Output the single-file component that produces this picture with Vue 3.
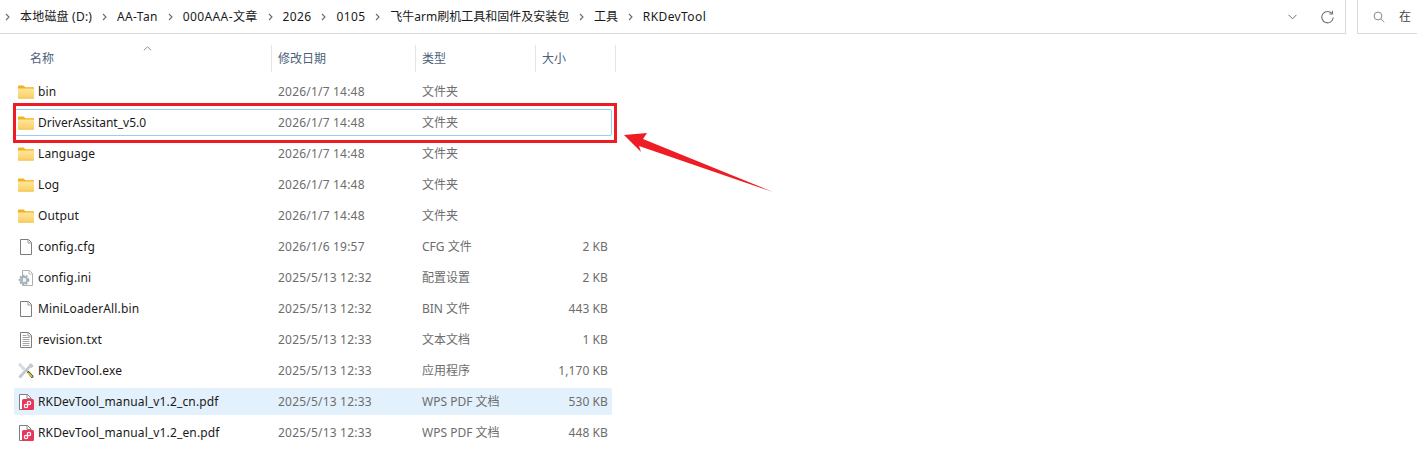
<script setup>
const crumbs = [
  { text: '本地磁盘 (D:)', cls: 'tight' },
  { text: 'AA-Tan', cls: 'latin' },
  { text: '000AAA-文章', cls: 'latin' },
  { text: '2026', cls: 'latin' },
  { text: '0105', cls: 'latin' },
  { text: '飞牛arm刷机工具和固件及安装包', cls: '' },
  { text: '工具', cls: '' },
  { text: 'RKDevTool', cls: 'latin' }
]
const columns = [
  { label: '名称', cls: 'col-name' },
  { label: '修改日期', cls: 'col-date' },
  { label: '类型', cls: 'col-type' },
  { label: '大小', cls: 'col-size' }
]
const files = [
  { name: 'bin', date: '2026/1/7 14:48', type: '文件夹', size: '', icon: 'folder' },
  { name: 'DriverAssitant_v5.0', date: '2026/1/7 14:48', type: '文件夹', size: '', icon: 'folder', state: 'focused' },
  { name: 'Language', date: '2026/1/7 14:48', type: '文件夹', size: '', icon: 'folder' },
  { name: 'Log', date: '2026/1/7 14:48', type: '文件夹', size: '', icon: 'folder' },
  { name: 'Output', date: '2026/1/7 14:48', type: '文件夹', size: '', icon: 'folder' },
  { name: 'config.cfg', date: '2026/1/6 19:57', type: 'CFG 文件', size: '2 KB', icon: 'doc' },
  { name: 'config.ini', date: '2025/5/13 12:32', type: '配置设置', size: '2 KB', icon: 'ini' },
  { name: 'MiniLoaderAll.bin', date: '2025/5/13 12:32', type: 'BIN 文件', size: '443 KB', icon: 'doc' },
  { name: 'revision.txt', date: '2025/5/13 12:33', type: '文本文档', size: '1 KB', icon: 'txt' },
  { name: 'RKDevTool.exe', date: '2025/5/13 12:33', type: '应用程序', size: '1,170 KB', icon: 'exe' },
  { name: 'RKDevTool_manual_v1.2_cn.pdf', date: '2025/5/13 12:33', type: 'WPS PDF 文档', size: '530 KB', icon: 'pdf', state: 'hovered' },
  { name: 'RKDevTool_manual_v1.2_en.pdf', date: '2025/5/13 12:33', type: 'WPS PDF 文档', size: '448 KB', icon: 'pdf' }
]
</script>

<template>
  <div class="window">
    <header class="topbar">
      <div class="address">
        <nav class="crumbs">
          <template v-for="c in crumbs" :key="c.text">
            <svg class="chev" width="5" height="8" viewBox="0 0 5 8"><path d="M1 1l3 3-3 3" fill="none" stroke="#6b6b6b" stroke-width="1.1" /></svg>
            <span class="crumb" :class="c.cls">{{ c.text }}</span>
          </template>
        </nav>
        <div class="address-tools">
          <svg width="9" height="6" viewBox="0 0 9 6"><path d="M.5.8l4 4 4-4" fill="none" stroke="#6f6f6f" stroke-width="1" /></svg>
          <svg width="13" height="14" viewBox="0 0 13 14"><path d="M10.800 3.400A5.700 5.700 0 1 0 12.200 7.500" fill="none" stroke="#707070" stroke-width="1.100" /><path d="M11.500 .8v3.200H8.300" fill="none" stroke="#707070" stroke-width="1.100" /></svg>
        </div>
      </div>
      <div class="search">
        <svg width="12" height="12" viewBox="0 0 12 12"><circle cx="5" cy="5" r="3.900" fill="none" stroke="#8a8a8a" stroke-width="1" /><path d="M8 8l3.300 3.300" stroke="#b08a70" stroke-width="1" /></svg>
        <span class="search-text">在</span>
      </div>
    </header>

    <div class="columns">
      <div v-for="c in columns" :key="c.label" class="col-head" :class="c.cls">{{ c.label }}</div>
      <svg class="sort" width="9" height="5" viewBox="0 0 9 5"><path d="M.8 4.400L4.500.8l3.700 3.600" fill="none" stroke="#8c8c8c" stroke-width="1" /></svg>
    </div>

    <ul class="list">
      <li v-for="f in files" :key="f.name" class="row" :class="f.state">
        <span class="cell-name">
          <svg v-if="f.icon === 'folder'" class="icon" width="16" height="16" viewBox="0 0 16 16">
            <defs>
              <linearGradient id="folderBody" x1="0" y1="0" x2="0" y2="1">
                <stop offset="0" stop-color="#fee59b" />
                <stop offset="1" stop-color="#fbcf62" />
              </linearGradient>
            </defs>
            <path d="M0 2.400C0 1.900.4 1.500 1 1.500h4.600L7.400 3.200H15c.6 0 1 .4 1 1v2H0z" fill="#f3b01f" />
            <path d="M0 4.600h15c.6 0 1 .4 1 1v8c0 .6-.4 1-1 1H1c-.6 0-1-.4-1-1z" fill="url(#folderBody)" />
            <path d="M0 13.700h16c0 .6-.4 .9-1 .9H1c-.6 0-1-.3-1-.9z" fill="#efbb4a" />
          </svg>
          <svg v-else-if="f.icon === 'doc'" class="icon" width="16" height="16" viewBox="0 0 16 16">
            <path d="M2.500.5h8l3 3v12h-11z" fill="#fff" stroke="#7d7d7d" />
            <path d="M10 .5v3.500h3.500" fill="none" stroke="#9a9a9a" />
          </svg>
          <svg v-else-if="f.icon === 'ini'" class="icon" width="16" height="16" viewBox="0 0 16 16">
            <path d="M4.500.5h7l3 3v12h-10z" fill="#fff" stroke="#b0b0b0" />
            <path d="M11 .5v3.500h3.500" fill="none" stroke="#c0c0c0" />
            <circle cx="6" cy="10" r="4.200" fill="none" stroke="#a2adb4" stroke-width="2.200" stroke-dasharray="1.800 1.200" />
            <circle cx="6" cy="10" r="3" fill="none" stroke="#aab4bb" stroke-width="1.800" />
            <circle cx="6" cy="10" r="1.300" fill="#eef1f3" />
          </svg>
          <svg v-else-if="f.icon === 'txt'" class="icon" width="16" height="16" viewBox="0 0 16 16">
            <path d="M2.500.5h8l3 3v12h-11z" fill="#fff" stroke="#7d7d7d" />
            <path d="M10 .5v3.500h3.500" fill="none" stroke="#9a9a9a" />
            <path d="M4.500 3.500h4M4.500 5.500h7M4.500 7.500h7M4.500 9.500h7M4.500 11.500h7M4.500 13.500h7" stroke="#9a9a9a" stroke-width=".9" />
          </svg>
          <svg v-else-if="f.icon === 'exe'" class="icon" width="16" height="16" viewBox="0 0 16 16">
            <path d="M12.500.5l2.800 2.300-1.700 1.700-1.100-.4-10 11-1.800-1.700L10.800 3z" fill="#c3cbd1" stroke="#98a1a8" stroke-width=".4" />
            <path d="M.5 1.800L2.300.4l4.600 5-1.500 1.700z" fill="#dde2e6" stroke="#a5adb3" stroke-width=".4" />
            <path d="M7.400 7.700l1.500-1.500 1.400 1.500-1.500 1.500z" fill="#b8bfc4" />
            <path d="M9 9.300l1.500-1.500 4.800 5c.7.900-.5 2.700-1.800 2.200z" fill="#4a4636" />
            <path d="M10.300 9.700l3.900 4.100" stroke="#efcd38" stroke-width="1.500" />
          </svg>
          <svg v-else class="icon" width="16" height="16" viewBox="0 0 16 16">
            <path d="M1.500.5h8l3.500 3.500v11.500h-11.500z" fill="#fff" stroke="#7d7d7d" />
            <path d="M9 .5v4h4" fill="none" stroke="#8a8a8a" />
            <rect x="4" y="5" width="12" height="11" rx="1.500" fill="#e8365d" />
            <circle cx="11" cy="9" r="1.700" fill="none" stroke="#fff" stroke-width="1.200" />
            <circle cx="8" cy="12" r="1.700" fill="none" stroke="#fff" stroke-width="1.200" />
          </svg>
          <span class="file-name">{{ f.name }}</span>
        </span>
        <span class="cell-date">{{ f.date }}</span>
        <span class="cell-type">{{ f.type }}</span>
        <span class="cell-size">{{ f.size }}</span>
      </li>
    </ul>

    <div class="red-box"></div>
    <svg class="arrow" width="160" height="70" viewBox="0 0 160 70">
      <polygon points="4,13 27,11 23,17 153,70 19,24 21,30" fill="#ee1c25" />
    </svg>
  </div>
</template>

<style>
html, body { margin: 0; background: #fff; }
</style>

<style scoped>
.window {
  position: relative;
  width: 1417px;
  height: 469px;
  overflow: hidden;
  background: #fff;
  font-family: "Noto Sans", "Noto Sans CJK SC", sans-serif;
  font-size: 12px;
  line-height: 16px;
  color: #1a1a1a;
}
.topbar {
  display: flex;
  height: 34px;
  gap: 11px;
}
.address {
  display: flex;
  align-items: center;
  justify-content: space-between;
  width: 1346px;
  box-sizing: border-box;
  border-right: 1px solid #d9d9d9;
  border-bottom: 1px solid #d9d9d9;
  padding: 0 11px 0 5px;
}
.crumbs { display: flex; align-items: center; height: 32px; }
.chev { margin-right: 10px; flex: none; }
.crumb { margin-right: 9.8px; white-space: nowrap; }
.crumb.latin { letter-spacing: .4px; }
.crumb.tight { letter-spacing: .2px; }
.address-tools { display: flex; align-items: center; gap: 24px; }
.search {
  flex: 1;
  display: flex;
  align-items: center;
  gap: 14px;
  box-sizing: border-box;
  border-left: 1px solid #d9d9d9;
  border-bottom: 1px solid #d9d9d9;
  padding-left: 15px;
}
.search-text { color: #444; }
.columns {
  position: relative;
  display: flex;
  width: 616px;
  height: 27px;
  margin-top: 11px;
}
.col-head {
  box-sizing: border-box;
  height: 27px;
  line-height: 27px;
  padding-left: 6px;
  color: #4c607a;
  border-right: 1px solid #e5e5e5;
}
.col-name { width: 272px; padding-left: 30px; }
.col-date { width: 144px; }
.col-type { width: 120px; }
.col-size { width: 80px; }
.sort { position: absolute; left: 143px; top: 1px; }
.list {
  list-style: none;
  margin: 6px 0 0 14px;
  padding: 0;
  width: 598px;
  display: flex;
  flex-direction: column;
  gap: 4px;
}
.row {
  display: flex;
  align-items: center;
  box-sizing: border-box;
  height: 27px;
  border: 1px solid transparent;
  border-radius: 2px;
  color: #6d6d6d;
}
.row.focused { border-color: #99cdf2; }
.row.hovered { background: #e3f1fc; }
.cell-name { display: flex; align-items: center; width: 263px; padding-left: 3px; box-sizing: border-box; color: #1a1a1a; }
.icon { flex: none; margin-right: 4px; }
.file-name { white-space: nowrap; letter-spacing: .14px; }
.row.focused .file-name { letter-spacing: 0; }
.cell-date { width: 144px; letter-spacing: .2px; }
.cell-type { width: 120px; }
.cell-size { width: 66px; text-align: right; letter-spacing: .1px; }
.red-box {
  position: absolute;
  left: 13px;
  top: 103px;
  width: 604px;
  height: 40px;
  box-sizing: border-box;
  border: 3px solid #ee1c25;
}
.arrow { position: absolute; left: 620px; top: 122px; }
</style>
